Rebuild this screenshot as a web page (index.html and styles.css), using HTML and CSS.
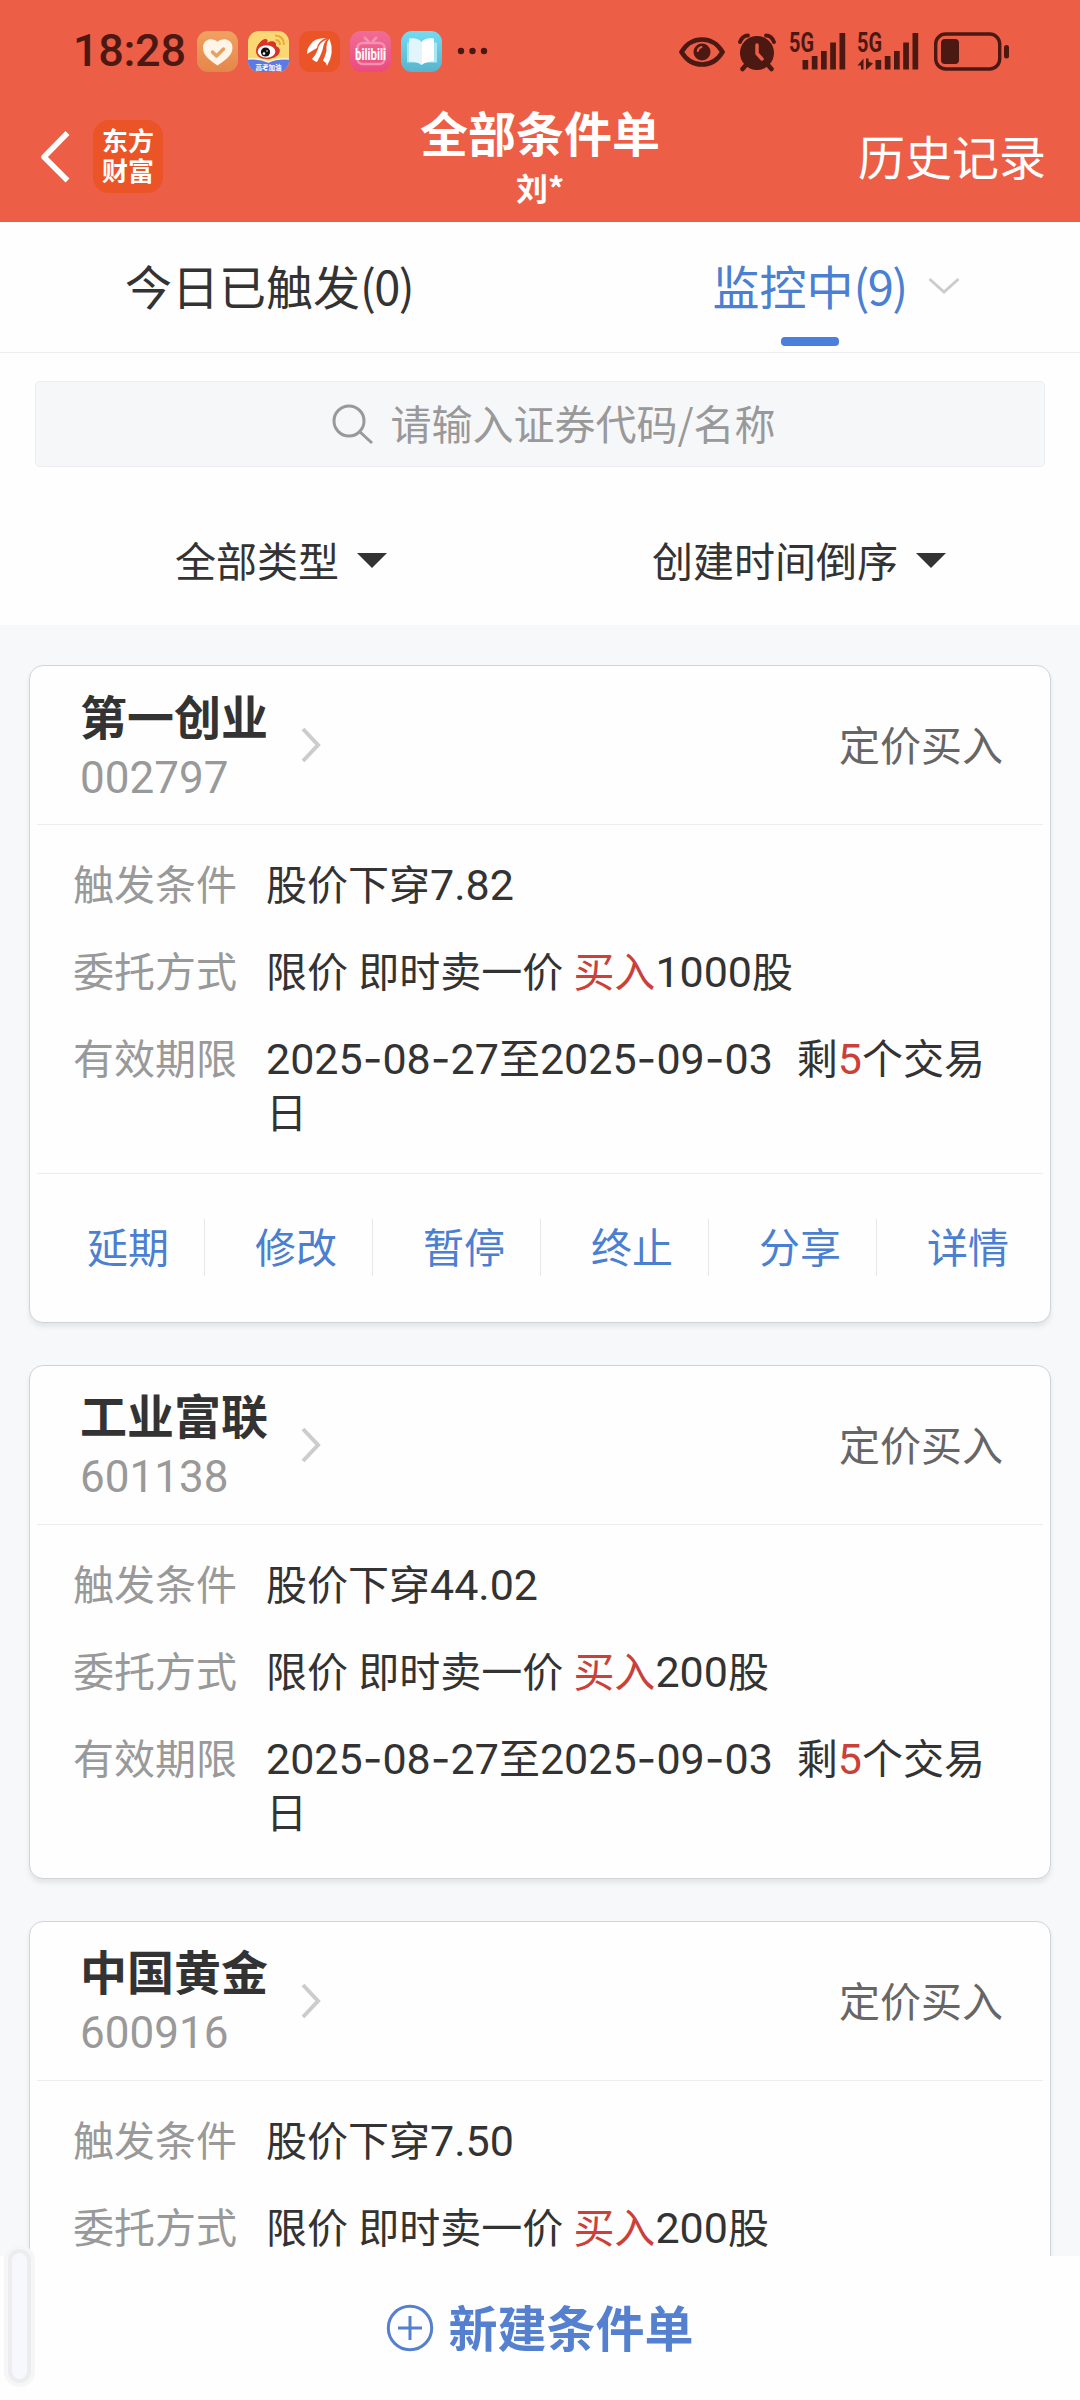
FILE: index.html
```html
<!DOCTYPE html>
<html lang="zh-CN">
<head>
<meta charset="utf-8">
<title>全部条件单</title>
<link rel="stylesheet" href="styles.css">
</head>
<body>
<div class="screen">
  <header class="header">
    <div class="status">
      <span class="clock">18:28</span>
      <div class="apps">
        <svg class="app" viewBox="0 0 41 41">
          <defs><linearGradient id="gHeart" x2="0" y2="1"><stop offset="0" stop-color="#f0a262"/><stop offset="1" stop-color="#e58649"/></linearGradient></defs>
          <rect width="41" height="41" rx="11" fill="url(#gHeart)"/>
          <path d="M20.500 11C17 6.500 6 6.800 6 17C6 25 14 30 20.500 34.500C27 30 35.500 25 35.500 17C35.500 6.800 24 6.500 20.500 11Z" fill="#fff4e8"/>
          <path d="M15.500 21L19.500 25L26.500 18" fill="none" stroke="#e8a05c" stroke-width="3.500" stroke-linecap="round" stroke-linejoin="round"/>
        </svg>
        <svg class="app" viewBox="0 0 41 41">
          <defs><clipPath id="cWeibo"><rect width="41" height="41" rx="11"/></clipPath></defs>
          <g clip-path="url(#cWeibo)">
            <rect width="41" height="41" fill="#fbd873"/>
            <path d="M0 28Q12 27 20.500 31Q29 27 41 28V41H0Z" fill="#5c79e6"/>
            <path d="M0 28Q12 27 20.500 31Q29 27 41 28" fill="none" stroke="#fff3c4" stroke-width="1.500"/>
            <path d="M8 20C8 14 15 7 18 8C21 9 19 12 19 12C23 9 29 10 28 15C36 18 31 28 19 28C12 28 8 25 8 20Z" fill="#da3227"/>
            <ellipse cx="18.500" cy="20.500" rx="8.800" ry="6.200" fill="#fff"/>
            <circle cx="17.500" cy="21" r="4.600" fill="#111"/>
            <circle cx="16" cy="22.500" r="1.300" fill="#fff"/><circle cx="19" cy="20" r=".8" fill="#fff"/>
            <path d="M27.500 9Q32 9 32 14M27 4.500Q36 4.500 36 14" fill="none" stroke="#e9a83c" stroke-width="2"/>
          </g>
          <text class="app-tag" x="20.500" y="38.500" text-anchor="middle">高考加油</text>
        </svg>
        <svg class="app" viewBox="0 0 41 41">
          <rect width="41" height="41" rx="11" fill="#eb5427"/>
          <path d="M27 7Q15 7 12 13Q8 17 8 23Q16 18 18 17Q19 10 27 7ZM29 8Q20 11 19 18Q17 24 13 28Q16 31 18 31Q23 22 24 17Q25 10 29 8ZM30.500 7.500Q36 22 28 35Q27 31 24 29.500Q28 22 27.500 15Q27.500 11 30.500 7.500Z" fill="#fff"/>
        </svg>
        <svg class="app" viewBox="0 0 41 41">
          <defs><linearGradient id="gBili" x2="0" y2="1"><stop offset="0" stop-color="#f06d96"/><stop offset="1" stop-color="#ec4a7c"/></linearGradient></defs>
          <rect width="41" height="41" rx="11" fill="url(#gBili)"/>
          <rect x="7.500" y="12" width="27" height="21" rx="5" fill="none" stroke="#f592b2" stroke-width="2.500"/>
          <path d="M14 6L19 11M27 6L22 11" stroke="#f592b2" stroke-width="2.500"/>
          <text class="app-word" x="5" y="28.500" textLength="31" lengthAdjust="spacingAndGlyphs">bilibili</text>
        </svg>
        <svg class="app" viewBox="0 0 41 41">
          <defs><linearGradient id="gBook" x2="0" y2="1"><stop offset="0" stop-color="#72dcf3"/><stop offset="1" stop-color="#58b4cc"/></linearGradient></defs>
          <rect width="41" height="41" rx="11" fill="url(#gBook)"/>
          <path d="M6 11.500H36V31.500H24L20.500 34L17 31.500H6Z" fill="#a7e6f2"/>
          <path d="M8 7.500Q17 6.500 20.500 11V34Q17 30.500 8 30.500Z" fill="#e3f5fc"/>
          <path d="M33 7.500Q24 6.500 20.500 11V34Q24 30.500 33 30.500Z" fill="#fff"/>
        </svg>
      </div>
      <svg class="more" width="30" height="8" viewBox="0 0 30 8"><circle cx="4" cy="4" r="3.200"/><circle cx="15.500" cy="4" r="3.200"/><circle cx="27" cy="4" r="3.200"/></svg>
      <div class="indicators">
        <svg width="46" height="40" viewBox="0 0 46 40"><path d="M2.500 21Q10 8.500 23 8.500Q36 8.500 43.500 21Q36 33.500 23 33.500Q10 33.500 2.500 21Z" fill="none" stroke="#4b1812" stroke-width="4.500"/><circle cx="23" cy="21" r="8.500"/><path d="M18.800 20Q19.300 16.800 22.500 16" fill="none" stroke="#ec5e46" stroke-width="2" stroke-linecap="round"/></svg>
        <svg width="38" height="40" viewBox="0 0 38 40"><circle cx="19" cy="22" r="17"/><path d="M8 34L4.500 38M30 34L33.500 38" stroke="#4b1812" stroke-width="4.500" stroke-linecap="round"/><path d="M2 10.500Q4.500 4.500 10 4.500M28 4.500Q33.500 4.500 36 10.500" fill="none" stroke="#ec5e46" stroke-width="6.500"/><path d="M2 11Q4.500 4.500 10 4.500M28 4.500Q33.500 4.500 36 11" fill="none" stroke="#4b1812" stroke-width="3.800" stroke-linecap="round"/><path d="M19 14V22.500L24 28" fill="none" stroke="#ec5e46" stroke-width="3.500" stroke-linecap="round"/></svg>
        <svg width="57" height="40" viewBox="0 0 57 40"><text class="net" x="0" y="20.500" textLength="25" lengthAdjust="spacingAndGlyphs">5G</text><path d="M13.500 29h5.700v9.500h-5.700zM22.800 25h5.700v13.500h-5.700zM32 20h5.700v18.500H32zM41.200 11.500h5.700v27h-5.700zM50.500 2h5.700v36.500h-5.700z"/></svg>
        <svg width="62" height="40" viewBox="0 0 62 40"><text class="net" x="0" y="20.500" textLength="25" lengthAdjust="spacingAndGlyphs">5G</text><path d="M18.500 29h5.700v9.500h-5.700zM27.800 25h5.700v13.500h-5.700zM37 20h5.700v18.500H37zM46.200 11.500h5.700v27h-5.700zM55.500 2h5.700v36.500h-5.700z"/><path d="M6.500 27.500V38.500H4V34.500H0.500ZM9 27.500H11.500V30.500L16 32.500L9.500 38.500H9Z"/></svg>
        <svg class="battery" width="76" height="40" viewBox="0 0 76 40"><rect x="1.700" y="3" width="64" height="35" rx="10" fill="none" stroke="#4b1812" stroke-width="3.400"/><rect x="7" y="8" width="18" height="25" rx="4"/><rect x="70" y="14" width="5" height="13.500" rx="2.500"/></svg>
      </div>
    </div>
    <nav class="nav">
      <div class="nav-left">
        <svg width="31" height="56" viewBox="0 0 31 56"><path d="M27.500 4L4 28L27.500 51.500" fill="none" stroke="#fff" stroke-width="5.500" stroke-linejoin="round"/></svg>
        <div class="brand"><span>东方</span><span>财富</span></div>
      </div>
      <div class="nav-title"><h1>全部条件单</h1><p>刘*</p></div>
      <a class="nav-history">历史记录</a>
    </nav>
  </header>

  <section class="tabs">
    <div class="tab"><span class="tab-text">今日已触发<span class="tab-num">(0)</span></span></div>
    <div class="tab tab-on">
      <span class="tab-text">监控中<span class="tab-num">(9)</span></span>
      <svg width="32" height="18" viewBox="0 0 32 18"><path d="M1.500 2L16 15L30.500 2" fill="none" stroke="#ccc" stroke-width="3"/></svg>
    </div>
  </section>

  <section class="filters">
    <div class="search">
      <svg width="42" height="42" viewBox="0 0 42 42"><circle cx="17" cy="18" r="15" fill="none" stroke="#999" stroke-width="3"/><path d="M28 29L40 40" stroke="#999" stroke-width="3"/></svg>
      <span>请输入证券代码/名称</span>
    </div>
    <div class="selects">
      <div class="select">全部类型<i class="caret"></i></div>
      <div class="select">创建时间倒序<i class="caret"></i></div>
    </div>
  </section>

  <main class="list">
    <article class="card">
      <div class="card-head">
        <div><h2>第一创业</h2><p class="code">002797</p></div>
        <svg class="go" width="20" height="36" viewBox="0 0 20 36"><path d="M2 2L17 18L2 34" fill="none" stroke="#ccc" stroke-width="4"/></svg>
        <span class="kind">定价买入</span>
      </div>
      <dl class="rows">
        <dt>触发条件</dt><dd>股价下穿<span class="num">7.82</span></dd>
        <dt>委托方式</dt><dd>限价 即时卖一价 <em>买入</em><span class="num">1000</span>股</dd>
        <dt>有效期限</dt><dd><span class="num">2025<b>-</b>08<b>-</b>27</span>至<span class="num">2025<b>-</b>09<b>-</b>03</span><span class="gap"></span>剩<em class="num">5</em>个交易日</dd>
      </dl>
      <div class="actions"><a>延期</a><a>修改</a><a>暂停</a><a>终止</a><a>分享</a><a>详情</a></div>
    </article>

    <article class="card">
      <div class="card-head">
        <div><h2>工业富联</h2><p class="code">601138</p></div>
        <svg class="go" width="20" height="36" viewBox="0 0 20 36"><path d="M2 2L17 18L2 34" fill="none" stroke="#ccc" stroke-width="4"/></svg>
        <span class="kind">定价买入</span>
      </div>
      <dl class="rows rows-last">
        <dt>触发条件</dt><dd>股价下穿<span class="num">44.02</span></dd>
        <dt>委托方式</dt><dd>限价 即时卖一价 <em>买入</em><span class="num">200</span>股</dd>
        <dt>有效期限</dt><dd><span class="num">2025<b>-</b>08<b>-</b>27</span>至<span class="num">2025<b>-</b>09<b>-</b>03</span><span class="gap"></span>剩<em class="num">5</em>个交易日</dd>
      </dl>
    </article>

    <article class="card">
      <div class="card-head">
        <div><h2>中国黄金</h2><p class="code">600916</p></div>
        <svg class="go" width="20" height="36" viewBox="0 0 20 36"><path d="M2 2L17 18L2 34" fill="none" stroke="#ccc" stroke-width="4"/></svg>
        <span class="kind">定价买入</span>
      </div>
      <dl class="rows rows-last">
        <dt>触发条件</dt><dd>股价下穿<span class="num">7.50</span></dd>
        <dt>委托方式</dt><dd>限价 即时卖一价 <em>买入</em><span class="num">200</span>股</dd>
      </dl>
    </article>
  </main>

  <footer class="create">
    <svg width="48" height="48" viewBox="0 0 48 48"><path d="M24 12V36M12 24H36" stroke="#5580d0" stroke-width="3"/><circle cx="24" cy="24" r="21.700" fill="none" stroke="#5580d0" stroke-width="3"/></svg>
    <span>新建条件单</span>
  </footer>
  <div class="edge-handle"></div>
</div>
</body>
</html>
```
FILE: styles.css
```css
* { box-sizing: border-box; margin: 0; padding: 0; }
body { font-family: "Noto Sans CJK SC", sans-serif; color: #333; background: #fefefe; }
em, i { font-style: normal; }
svg { display: block; flex: none; overflow: visible; }

.screen { position: relative; display: flex; flex-direction: column; width: 1080px; height: 2400px; overflow: hidden; background: #f7f8fa; }

.header { height: 222px; flex: none; background: #ec5e46; color: #fff; }
.status { display: flex; align-items: center; height: 102px; padding: 0 70px 0 73px; color: #4b1812; fill: #4b1812; }
.clock { width: 124px; font: 500 45px/60px Roboto, sans-serif; letter-spacing: -.3px; }
.apps { display: flex; gap: 10px; }
.app { width: 41px; height: 41px; }
.app-tag { font: 700 6.500px "Noto Sans CJK SC", sans-serif; fill: #fff; }
.app-word { font: 700 17px Roboto, sans-serif; fill: #fff; }
.more { margin-left: 15px; }
.indicators { display: flex; margin-left: auto; }
.indicators svg + svg { margin-left: 13px; }
.indicators svg:nth-child(4) { margin-left: 11px; }
.indicators svg.battery { margin-left: 15px; }
.net { font: 700 27px Roboto, sans-serif; }

.nav { display: grid; grid-template-columns: 1fr 242px 1fr; height: 120px; padding: 0 34px 0 38px; }
.nav-left { display: flex; align-items: flex-start; gap: 22px; padding: 18px 0 0 2px; }
.nav-left > svg { margin-top: 9px; }
.brand { display: flex; flex-direction: column; align-items: center; width: 70px; height: 73px; padding-top: 5px; border-radius: 16px; background: #eb5427; font-weight: 700; font-size: 26px; line-height: 30px; }
.nav-title { text-align: center; margin-left: -4px; white-space: nowrap; }
.nav-title h1 { font-size: 48px; line-height: 59px; font-weight: 700; }
.nav-title p { font-size: 32px; line-height: 52px; font-weight: 700; }
.nav-history { justify-self: end; padding-top: 21px; font-size: 47px; line-height: 64px; }

.tabs { display: grid; grid-template-columns: 1fr 1fr; height: 131px; flex: none; border-bottom: 1.500px solid #ecedef; background: #fefefe; }
.tab { display: flex; align-items: center; justify-content: center; height: 128px; font-size: 47px; }
.tab-text { padding-bottom: 4px; }
.tab-num { letter-spacing: -1.600px; }
.tab:first-child { padding-right: 2px; }
.tab-on { position: relative; gap: 21px; padding-left: 52px; color: #4b7fd2; }
.tab-on::after { content: ""; position: absolute; left: 241px; bottom: 4px; width: 58px; height: 9px; border-radius: 4px; background: #4a7fdb; }

.filters { height: 272px; flex: none; padding: 28px 35px 0; background: #fefefe; }
.search { display: flex; align-items: center; justify-content: center; gap: 16px; height: 86px; padding-left: 28px; border: 1px solid #ebedf0; border-radius: 5px; background: #f6f7f9; color: #999; font-size: 41px; }
.search span { padding-bottom: 4px; }
.selects { display: flex; padding: 64px 0 0 140px; font-size: 41px; line-height: 56px; }
.select { display: flex; align-items: center; gap: 18px; width: 477px; flex: none; white-space: nowrap; }
.caret { margin-top: 2px; border: solid transparent; border-width: 15px 15px 0; border-top-color: #333; }

.list { flex: 1; min-height: 0; overflow: hidden; padding: 40px 29px 0; }
.card { margin-bottom: 42px; border: 1.500px solid #cfd3d8; border-radius: 14px; background: #fefefe; box-shadow: 0 4px 5px rgba(0, 0, 0, .08); padding: 0 7px; }
.card-head { display: flex; align-items: center; height: 159px; padding: 0 40px 0 43px; border-bottom: 1px solid #ecedef; }
.card-head > div { width: 221px; }
.card h2 { font-size: 47px; line-height: 62px; font-weight: 700; white-space: nowrap; margin-top: -1px; }
.code { padding-top: 4px; font: 400 44px/56px Roboto, sans-serif; color: #999; }
.kind { margin-left: auto; padding-bottom: 4px; font-size: 41px; color: #666; }
.rows { display: grid; grid-template-columns: 193px 1fr; row-gap: 32.600px; padding: 30px 50px 35px 36px; font-size: 41px; line-height: 54.400px; }
.rows dt { color: #999; }
.rows dd { word-spacing: 1px; }
.rows em { color: #cb4038; }
.num { font-family: Roboto, sans-serif; font-size: 43px; line-height: 46px; }
.num b { font-family: Inter, sans-serif; font-weight: 400; }
.gap { display: inline-block; width: 24px; }
.rows-last { padding-bottom: 40px; }
.actions { display: grid; grid-template-columns: repeat(6, 168px); height: 149px; align-items: center; border-top: 1px solid #ecedef; }
.actions a { height: 57px; padding-left: 50px; border-right: 1px solid #e6e8eb; color: #4b7fd2; font-size: 41px; line-height: 52px; }
.actions a:last-child { border: 0; }

.create { display: flex; align-items: center; justify-content: center; gap: 14px; height: 144px; flex: none; background: #fefefe; color: #5580d0; font-size: 49px; font-weight: 700; }
.create span { padding-bottom: 5px; }
.edge-handle { position: absolute; left: 12px; top: 2253px; width: 15px; height: 126px; border-radius: 8px; background: #f7f8fe; box-shadow: 0 0 0 4px #ededef, 0 0 0 8px #f6f6f7; }
```
